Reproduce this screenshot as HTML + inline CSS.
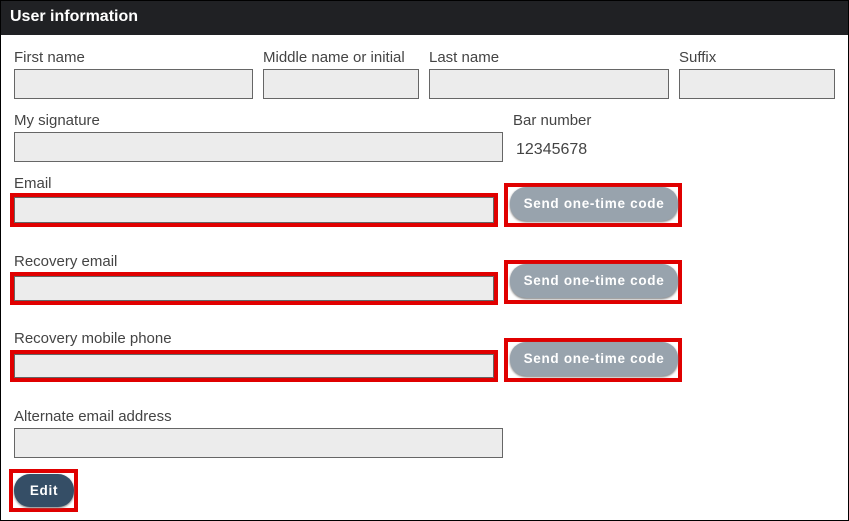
<!DOCTYPE html>
<html><head><style>
*{box-sizing:border-box;margin:0;padding:0}
body{width:849px;height:521px;background:#fff;font-family:"Liberation Sans",sans-serif;position:relative;overflow:hidden}
.frame{position:absolute;left:0;top:0;width:849px;height:521px;border:1px solid #000}
.hdr{position:absolute;left:0;top:0;width:849px;height:35px;background:#202124;color:#fff;font-weight:bold;font-size:16px;padding:8px 10px}
.l{position:absolute;font-size:15px;color:#444;line-height:17px}
.i{position:absolute;background:#ececec;border:1px solid #666}
.r{position:absolute;border:4px solid #e00000}
.b{position:absolute;background:#98a3ad;color:#fff;font-weight:bold;font-size:13.5px;letter-spacing:.7px;border-radius:16px;text-align:center;line-height:33px;box-shadow:0 1px 2px #777}
</style></head><body>
<div class="hdr">User information</div>
<div class="frame"></div>
<div class="l" style="left:14px;top:49px">First name</div>
<div class="l" style="left:263px;top:49px">Middle name or initial</div>
<div class="l" style="left:429px;top:49px">Last name</div>
<div class="l" style="left:679px;top:49px">Suffix</div>
<div class="i" style="left:14px;top:69px;width:239px;height:30px"></div>
<div class="i" style="left:263px;top:69px;width:156px;height:30px"></div>
<div class="i" style="left:429px;top:69px;width:240px;height:30px"></div>
<div class="i" style="left:679px;top:69px;width:156px;height:30px"></div>
<div class="l" style="left:14px;top:112px">My signature</div>
<div class="l" style="left:513px;top:112px">Bar number</div>
<div class="i" style="left:14px;top:132px;width:489px;height:30px"></div>
<div class="l" style="left:516px;top:141px;font-size:16px">12345678</div>

<div class="l" style="left:14px;top:175px">Email</div>
<div class="r" style="left:10px;top:193px;width:488px;height:34px"></div>
<div class="i" style="left:14px;top:197px;width:480px;height:26px"></div>
<div class="r" style="left:504px;top:183px;width:178px;height:44px"></div>
<div class="b" style="left:510px;top:187px;width:168px;height:34px">Send one-time code</div>

<div class="l" style="left:14px;top:253px">Recovery email</div>
<div class="r" style="left:10px;top:272px;width:488px;height:33px"></div>
<div class="i" style="left:14px;top:276px;width:480px;height:25px"></div>
<div class="r" style="left:504px;top:260px;width:178px;height:44px"></div>
<div class="b" style="left:510px;top:264px;width:168px;height:34px">Send one-time code</div>

<div class="l" style="left:14px;top:330px">Recovery mobile phone</div>
<div class="r" style="left:10px;top:350px;width:488px;height:32px"></div>
<div class="i" style="left:14px;top:354px;width:480px;height:24px"></div>
<div class="r" style="left:504px;top:338px;width:178px;height:44px"></div>
<div class="b" style="left:510px;top:342px;width:168px;height:34px">Send one-time code</div>

<div class="l" style="left:14px;top:408px">Alternate email address</div>
<div class="i" style="left:14px;top:428px;width:489px;height:30px"></div>
<div class="r" style="left:9px;top:469px;width:69px;height:43px"></div>
<div class="b" style="left:14px;top:474px;width:60px;height:33px;background:#354e66;line-height:33px">Edit</div>
</body></html>
